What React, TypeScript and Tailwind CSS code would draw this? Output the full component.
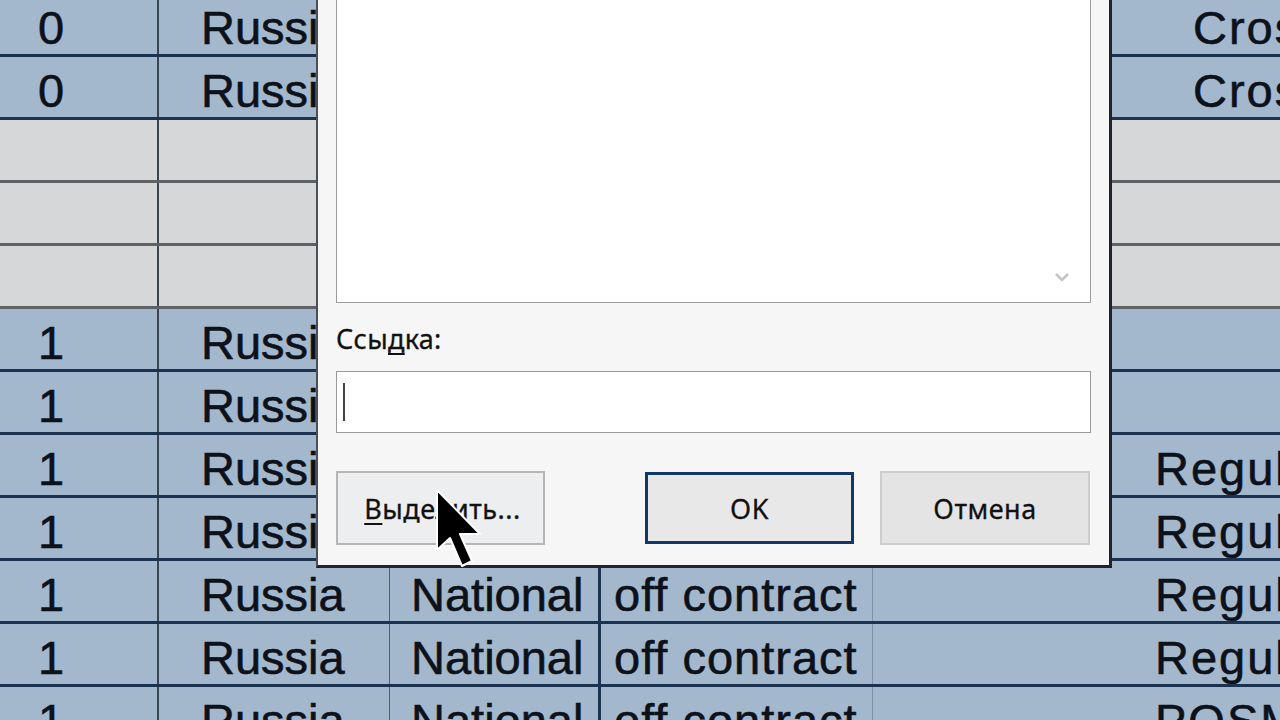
import React from 'react';

type Row = {
  kind: 'blue' | 'gray';
  a?: string;
  b?: string;
  c?: string;
  d?: string;
  f?: string;
  fPad?: string;
};

const rows: Row[] = [
  { kind: 'blue', a: '0', b: 'Russia', c: 'National', d: 'off contract', f: 'Crossborder', fPad: 'pl-[48px]' },
  { kind: 'blue', a: '0', b: 'Russia', c: 'National', d: 'off contract', f: 'Crossborder', fPad: 'pl-[48px]' },
  { kind: 'gray' },
  { kind: 'gray' },
  { kind: 'gray' },
  { kind: 'blue', a: '1', b: 'Russia', c: 'National', d: 'off contract' },
  { kind: 'blue', a: '1', b: 'Russia', c: 'National', d: 'off contract' },
  { kind: 'blue', a: '1', b: 'Russia', c: 'National', d: 'off contract', f: 'Regular', fPad: 'pl-[10px]' },
  { kind: 'blue', a: '1', b: 'Russia', c: 'National', d: 'off contract', f: 'Regular', fPad: 'pl-[10px]' },
  { kind: 'blue', a: '1', b: 'Russia', c: 'National', d: 'off contract', f: 'Regular', fPad: 'pl-[10px]' },
  { kind: 'blue', a: '1', b: 'Russia', c: 'National', d: 'off contract', f: 'Regular', fPad: 'pl-[10px]' },
  { kind: 'blue', a: '1', b: 'Russia', c: 'National', d: 'off contract', f: 'POSM', fPad: 'pl-[10px]' },
];

function SheetRow({ row }: { row: Row }) {
  const blue = row.kind === 'blue';
  return (
    <div
      className={
        'flex h-[63px] shrink-0 border-b-[3px] pt-[8px] ' +
        (blue ? 'bg-[#a3b8cc] border-[#1b3350]' : 'bg-[#d6d7d8] border-[#5e6266]')
      }
    >
      <div className="w-[159px] shrink-0 -mt-[8px] pt-[8px] border-r-2 border-[#3b4450] flex items-center pl-[38px]">{row.a}</div>
      <div className="w-[231px] shrink-0 -mt-[8px] pt-[8px] border-r border-[#56606c] flex items-center pl-[42px] overflow-hidden whitespace-nowrap">{row.b}</div>
      <div className="w-[211px] shrink-0 -mt-[8px] pt-[8px] border-r-[3px] border-[#1b3350] flex items-center pl-[21px] overflow-hidden whitespace-nowrap">{row.c}</div>
      <div className="w-[272px] shrink-0 -mt-[8px] pt-[8px] border-r border-[#8193a6] flex items-center pl-[13px] overflow-hidden whitespace-nowrap tracking-[1px]">{row.d}</div>
      <div className="w-[272px] shrink-0"></div>
      <div className={'flex-1 flex items-center overflow-hidden whitespace-nowrap tracking-[2px] ' + (row.fPad ?? '')}>{row.f}</div>
    </div>
  );
}

function Cursor() {
  return (
    <svg className="absolute left-[432px] top-[488px]" width="60" height="90" viewBox="0 0 60 90">
      <path
        d="M5 2 L5 62 L18 50 L30 78 L40 73 L28 46 L48 46 Z"
        fill="#000"
        stroke="#fff"
        strokeWidth="2"
        strokeLinejoin="round"
      />
    </svg>
  );
}

function Dialog() {
  return (
    <div className="absolute left-[316px] top-[-40px] w-[796px] h-[608px] bg-[#f6f6f6] border-l-2 border-[#4a4f55] border-r-[3px] border-b-[3px] border-r-[#20242a] border-b-[#20242a] flex flex-col px-[18px] font-['Noto_Sans',sans-serif] text-[#111] [-webkit-text-stroke:0.3px_#111]">
      {/* list area */}
      <div className="relative h-[343px] shrink-0 bg-white border border-[#9c9c9c] border-t-0">
        <svg className="absolute right-[20px] bottom-[20px]" width="16" height="10" viewBox="0 0 16 10">
          <path d="M2 2 L8 8 L14 2" fill="none" stroke="#c4c4c4" strokeWidth="2.5" />
        </svg>
      </div>
      <div className="mt-[18px] text-[27px] leading-[36px] tracking-[0.3px]">
        Ссы<span className="underline underline-offset-4">д</span>ка:
      </div>
      <div className="mt-[14px] h-[62px] bg-white border border-[#9a9a9a] flex items-center pl-[6px]">
        <div className="w-[2px] h-[38px] bg-[#444]"></div>
      </div>
      <div className="mt-[38px] flex items-center text-[27px] tracking-[0.5px]">
        <div className="w-[209px] h-[74px] border-2 border-[#b5b5b5] bg-[#eceef0] flex items-center justify-center pt-[3px] pl-[4px]">
          <span><span className="underline underline-offset-4">В</span>ыделить...</span>
        </div>
        <div className="ml-[100px] w-[209px] h-[72px] border-[3px] border-[#123867] bg-[#e8e8e8] flex items-center justify-center pt-[3px]">
          OK
        </div>
        <div className="ml-[26px] w-[210px] h-[74px] border-2 border-[#cdcdcd] bg-[#e4e4e4] flex items-center justify-center pt-[3px]">
          Отмена
        </div>
      </div>
    </div>
  );
}

export default function App() {
  return (
    <div className="relative w-[1280px] h-[720px] overflow-hidden bg-[#a3b8cc] font-['Liberation_Sans',Arial,sans-serif] text-[47px] text-[#0c111a] [-webkit-text-stroke:0.6px_#0c111a]">
      <div className="flex flex-col mt-[-6px]">
        {rows.map((r, i) => (
          <SheetRow key={i} row={r} />
        ))}
      </div>
      <Dialog />
      <Cursor />
    </div>
  );
}
